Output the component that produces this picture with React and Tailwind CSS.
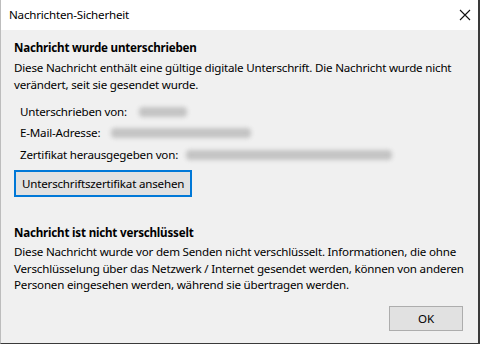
export default function App() {
  const font = { fontFamily: '"Noto Sans", "Open Sans", sans-serif' };
  return (
    <div className="w-[480px] h-[344px] overflow-hidden bg-[#f0f0f0] flex flex-col border-r-2 border-b border-l border-r-[#3a3a3a] border-b-[#3a3a3a] border-l-[#bdbdbd] text-[11.6px] tracking-[-0.2px] text-[#000] whitespace-nowrap" style={font}>
      <div className="h-[30px] bg-white flex items-center justify-between pl-[8px] pr-[6px] shrink-0">
        <span className="leading-none">Nachrichten-Sicherheit</span>
        <svg width="12" height="12" viewBox="0 0 12 12" className="mr-[1px]">
          <path d="M1 1 L11 11 M11 1 L1 11" stroke="#111" strokeWidth="1.1" fill="none" />
        </svg>
      </div>
      <div className="flex-1 flex flex-col px-[13px] pt-[9px] pb-[12px]">
        <div className="font-bold leading-[17px]">Nachricht wurde unterschrieben</div>
        <div className="leading-[17px] mt-[3px]">
          Diese Nachricht enthält eine gültige digitale Unterschrift. Die Nachricht wurde nicht<br />
          verändert, seit sie gesendet wurde.
        </div>
        <div className="flex flex-col gap-[4.5px] pl-[6px] mt-[10px]">
          <div className="flex items-center h-[17px]">
            <span>Unterschrieben von:</span>
            <span className="ml-[12px] w-[48px] h-[10px] bg-[#c4c4c4] rounded blur-[2px]" />
          </div>
          <div className="flex items-center h-[17px]">
            <span>E-Mail-Adresse:</span>
            <span className="ml-[11px] w-[140px] h-[10px] bg-[#c4c4c4] rounded blur-[2px]" />
          </div>
          <div className="flex items-center h-[17px]">
            <span>Zertifikat herausgegeben von:</span>
            <span className="ml-[8px] w-[206px] h-[10px] bg-[#c4c4c4] rounded blur-[2px]" />
          </div>
        </div>
        <div className="mt-[7px]">
          <button className="h-[27px] px-[6px] bg-[#e1e1e1] border-2 border-[#0078d7] leading-none">
            Unterschriftszertifikat ansehen
          </button>
        </div>
        <div className="font-bold leading-[17px] mt-[27px]">Nachricht ist nicht verschlüsselt</div>
        <div className="leading-[16.5px] mt-[3px]">
          Diese Nachricht wurde vor dem Senden nicht verschlüsselt. Informationen, die ohne<br />
          Verschlüsselung über das Netzwerk / Internet gesendet werden, können von anderen<br />
          Personen eingesehen werden, während sie übertragen werden.
        </div>
        <div className="flex justify-end mt-auto pr-[2px]">
          <button className="w-[74px] h-[25px] bg-[#e1e1e1] border border-[#adadad] leading-none">OK</button>
        </div>
      </div>
    </div>
  );
}
